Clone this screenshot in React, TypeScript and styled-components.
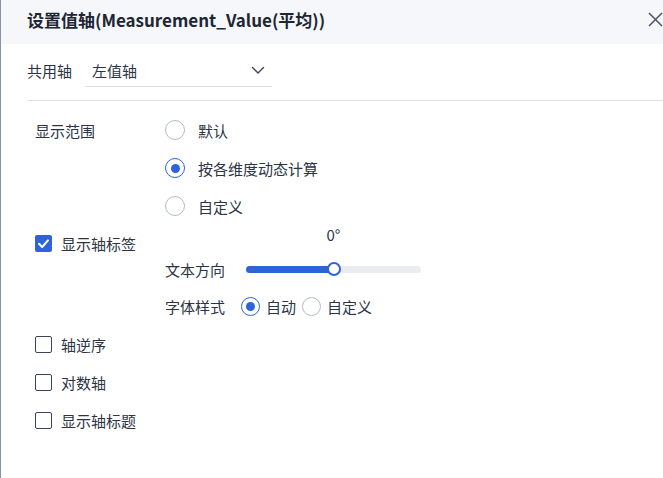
import React from "react";
import styled, { createGlobalStyle } from "styled-components";

const Global = createGlobalStyle`
  html, body { margin: 0; padding: 0; background: #ffffff; }
  body { font-family: "Noto Sans CJK SC", "Noto Sans", sans-serif; color: #2b3445; }
  * { box-sizing: border-box; }
`;

const Dialog = styled.div`
  width: 663px;
  height: 478px;
  border-left: 1px solid #8a94a7;
  background: #fff;
  display: flex;
  flex-direction: column;
  overflow: hidden;
`;

const Header = styled.div`
  height: 44px;
  background: #f5f7fb;
  display: flex;
  align-items: center;
  justify-content: space-between;
  padding: 0 0 0 26px;
`;

const Title = styled.div`
  font-size: 17px;
  font-weight: 700;
  color: #1f2633;
  line-height: 1;
  margin-top: -6px;
`;

const CloseBtn = styled.button`
  width: 20px;
  height: 20px;
  border: 0;
  background: transparent;
  padding: 0;
  margin: -6px -2px 0 0;
  display: flex;
  align-items: center;
  justify-content: center;
  color: #4a5468;
`;

const SelectRow = styled.div`
  display: flex;
  align-items: flex-start;
  padding: 13px 0 0 26px;
`;

const FieldLabel = styled.span`
  font-size: 15px;
  line-height: 27px;
  height: 30px;
  width: 58px;
  white-space: nowrap;
`;

const SelectBox = styled.div`
  width: 187px;
  height: 30px;
  border-bottom: 1px solid #d9dde4;
  display: flex;
  align-items: center;
  justify-content: space-between;
  padding: 0 7px 3px 7px;
  font-size: 15px;
`;

const Divider = styled.div`
  height: 1px;
  background: #dde1e7;
  margin: 13px 0 0 26px;
`;

const Body = styled.div`
  padding: 10px 0 0 34px;
  display: grid;
  grid-template-columns: 130px 1fr;
  align-items: start;
`;

const LabelCell = styled.div`
  font-size: 15px;
  height: 38px;
  display: flex;
  align-items: center;
`;

const RadioList = styled.div`
  display: flex;
  flex-direction: column;
`;

const RadioItem = styled.label<{ $h?: number }>`
  display: flex;
  align-items: center;
  height: ${(p) => p.$h ?? 38}px;
  font-size: 15px;
  gap: 13px;
`;

const RadioCircle = styled.span<{ $on?: boolean; $size?: number }>`
  width: ${(p) => p.$size ?? 20}px;
  height: ${(p) => p.$size ?? 20}px;
  border-radius: 50%;
  border: 1px solid ${(p) => (p.$on ? "#2f64d8" : "#b4bac6")};
  display: flex;
  align-items: center;
  justify-content: center;
  flex: none;
  &::after {
    content: "";
    width: 9px;
    height: 9px;
    border-radius: 50%;
    background: ${(p) => (p.$on ? "#2f64d8" : "transparent")};
  }
`;

const CheckItem = styled.label<{ $h?: number }>`
  display: flex;
  align-items: center;
  height: ${(p) => p.$h ?? 38}px;
  font-size: 15px;
  gap: 9px;
  white-space: nowrap;
`;

const CheckBox = styled.span<{ $on?: boolean }>`
  width: 17px;
  height: 17px;
  border-radius: 2px;
  flex: none;
  border: ${(p) => (p.$on ? "0" : "1.5px solid #3a4558")};
  background: ${(p) => (p.$on ? "#2f64d8" : "#fff")};
  display: flex;
  align-items: center;
  justify-content: center;
`;

const SubBlock = styled.div`
  display: flex;
  flex-direction: column;
`;

const AngleLabel = styled.div`
  height: 20px;
  line-height: 20px;
  font-size: 15px;
  margin-left: 81px;
  width: 175px;
  text-align: center;
`;

const SliderRow = styled.div`
  display: flex;
  align-items: center;
  height: 26px;
  margin-top: 11px;
  font-size: 15px;
`;

const SubLabel = styled.span`
  width: 81px;
  white-space: nowrap;
`;

const Track = styled.div`
  position: relative;
  width: 175px;
  height: 7px;
  border-radius: 4px;
  background: #ebecef;
`;

const Fill = styled.div`
  height: 100%;
  border-radius: 4px;
  background: #2f64d8;
`;

const Thumb = styled.div`
  position: absolute;
  top: 50%;
  width: 14px;
  height: 14px;
  border-radius: 50%;
  background: #fff;
  border: 2px solid #2f64d8;
  transform: translate(-50%, -50%);
`;

const FontRow = styled.div`
  display: flex;
  align-items: center;
  height: 38px;
  margin-top: 5px;
  font-size: 15px;
`;

const FontLabel = styled.span`
  width: 76px;
  white-space: nowrap;
`;

const InlineRadio = styled.label`
  display: flex;
  align-items: center;
  gap: 6px;
  margin-right: 6px;
`;

const CheckList = styled.div`
  display: flex;
  flex-direction: column;
  padding-left: 34px;
`;

const Chevron = () => (
  <svg width="14" height="14" viewBox="0 0 14 14" fill="none">
    <path d="M1.5 4.5 L7 10 L12.5 4.5" stroke="#3a4558" strokeWidth="1.4" strokeLinecap="round" strokeLinejoin="round" />
  </svg>
);

const CloseIcon = () => (
  <svg width="15" height="15" viewBox="0 0 15 15" fill="none">
    <path d="M1 1 L14 14 M14 1 L1 14" stroke="#4a5468" strokeWidth="1.5" />
  </svg>
);

const Tick = () => (
  <svg width="13" height="13" viewBox="0 0 13 13" fill="none">
    <path d="M2 6.8 L5.2 10 L11 3.4" stroke="#fff" strokeWidth="2" strokeLinecap="round" strokeLinejoin="round" />
  </svg>
);

export default function App() {
  const value = 50;
  return (
    <Dialog>
      <Global />
      <Header>
        <Title>设置值轴(Measurement_Value(平均))</Title>
        <CloseBtn aria-label="close">
          <CloseIcon />
        </CloseBtn>
      </Header>
      <SelectRow>
        <FieldLabel>共用轴</FieldLabel>
        <SelectBox>
          <span>左值轴</span>
          <Chevron />
        </SelectBox>
      </SelectRow>
      <Divider />
      <Body>
        <LabelCell>显示范围</LabelCell>
        <RadioList>
          <RadioItem>
            <RadioCircle />
            默认
          </RadioItem>
          <RadioItem>
            <RadioCircle $on />
            按各维度动态计算
          </RadioItem>
          <RadioItem>
            <RadioCircle />
            自定义
          </RadioItem>
        </RadioList>
        <CheckItem $h={36}>
          <CheckBox $on>
            <Tick />
          </CheckBox>
          显示轴标签
        </CheckItem>
        <SubBlock>
          <AngleLabel>0°</AngleLabel>
          <SliderRow>
            <SubLabel>文本方向</SubLabel>
            <Track>
              <Fill style={{ width: `${value}%` }} />
              <Thumb style={{ left: `${value}%` }} />
            </Track>
          </SliderRow>
          <FontRow>
            <FontLabel>字体样式</FontLabel>
            <InlineRadio>
              <RadioCircle $on $size={19} />
              自动
            </InlineRadio>
            <InlineRadio>
              <RadioCircle $size={19} />
              自定义
            </InlineRadio>
          </FontRow>
        </SubBlock>
      </Body>
      <CheckList>
        <CheckItem>
          <CheckBox />
          轴逆序
        </CheckItem>
        <CheckItem>
          <CheckBox />
          对数轴
        </CheckItem>
        <CheckItem>
          <CheckBox />
          显示轴标题
        </CheckItem>
      </CheckList>
    </Dialog>
  );
}
